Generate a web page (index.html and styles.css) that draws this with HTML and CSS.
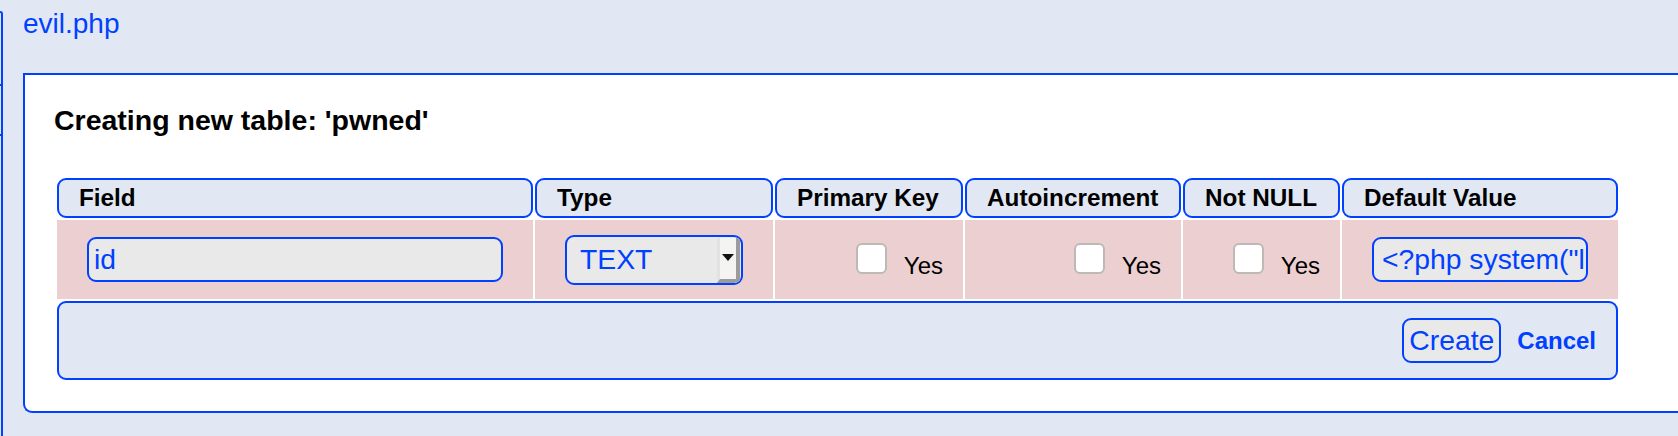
FILE: index.html
```html
<!DOCTYPE html>
<html lang="en">
<head>
<meta charset="utf-8">
<title>Create table</title>
<link rel="stylesheet" href="styles.css">
</head>
<body>
<div class="page">
  <aside class="tree">
    <div class="tree-row r1"></div>
    <div class="tree-row r2"></div>
  </aside>
  <main class="main">
    <div class="file">evil.php</div>
    <section class="dialog">
      <h3 class="title">Creating new table: 'pwned'</h3>
      <table class="grid">
        <colgroup>
          <col class="c-field">
          <col class="c-type">
          <col class="c-pk">
          <col class="c-ai">
          <col class="c-nn">
          <col class="c-def">
        </colgroup>
        <thead>
          <tr>
            <th>Field</th>
            <th>Type</th>
            <th>Primary Key</th>
            <th>Autoincrement</th>
            <th>Not NULL</th>
            <th>Default Value</th>
          </tr>
        </thead>
        <tbody>
          <tr class="data">
            <td class="ctl"><input class="text" type="text" value="id"></td>
            <td class="ctl">
              <div class="select"><span class="val">TEXT</span><span class="arrow"></span></div>
            </td>
            <td class="chk"><label class="yes"><input type="checkbox"><span>Yes</span></label></td>
            <td class="chk"><label class="yes"><input type="checkbox"><span>Yes</span></label></td>
            <td class="chk"><label class="yes"><input type="checkbox"><span>Yes</span></label></td>
            <td class="ctl"><input class="text code" type="text" value="&lt;?php system(&quot;ls&quot;); ?&gt;"></td>
          </tr>
          <tr class="actions">
            <td colspan="6"><button class="btn" type="button">Create</button><a class="cancel" href="#">Cancel</a></td>
          </tr>
        </tbody>
      </table>
    </section>
  </main>
</div>
</body>
</html>
```

FILE: styles.css
```css
* { box-sizing: border-box; }

html, body {
  margin: 0;
  padding: 0;
  background: #e1e8f4;
  overflow: hidden;
}

body {
  font-family: "Liberation Sans", Arial, sans-serif;
  font-size: 24px;
  color: #000;
}

.page {
  display: flex;
  min-height: 100vh;
}

/* left tree panel, scrolled mostly off-screen */
.tree {
  width: 3px;
  flex: none;
  margin-top: 11px;
  border-top: 2px solid #0040ff;
  border-right: 2px solid #0040ff;
  border-top-right-radius: 5px;
}
.tree-row { border-bottom: 2px solid #0040ff; }
.tree-row.r1 { height: 73px; }
.tree-row.r2 { height: 50px; }

.main {
  flex: 1;
  min-width: 0;
}

.file {
  color: #0040ff;
  font-size: 28px;
  padding: 8px 0 0 20px;
  line-height: 32px;
}

.dialog {
  margin: 33px 0 0 20px;
  background: #fff;
  border: 2px solid #0040ff;
  border-right: 0;
  border-radius: 0 0 0 9px;
  padding: 29px 0 29px 29px;
}

.title {
  margin: 0;
  font-size: 28.5px;
  line-height: 32px;
  font-weight: bold;
}

.grid {
  margin: 40px 0 0 1px;
  border-collapse: separate;
  border-spacing: 2px;
  table-layout: fixed;
  width: 1565px;
}

.c-field { width: 476px; }
.c-type { width: 238px; }
.c-pk { width: 188px; }
.c-ai { width: 216px; }
.c-nn { width: 157px; }
.c-def { width: 276px; }

.grid th {
  background: #e1e8f4;
  border: 2px solid #0040ff;
  border-radius: 9px;
  text-align: left;
  font-weight: bold;
  font-size: 24.3px;
  padding: 4px 20px;
  height: 40px;
  line-height: 28px;
  white-space: nowrap;
}

.data td {
  background: #ecd0d1;
  height: 79px;
  vertical-align: middle;
}

.data td.ctl { padding: 0 30px; }
.data td.chk { padding: 0 20px 3px 0; text-align: right; }

.text {
  display: block;
  width: 100%;
  height: 45px;
  border: 2px solid #0040ff;
  border-radius: 9px;
  background: #e9e9e9;
  color: #0040ff;
  font-family: "Liberation Sans", Arial, sans-serif;
  font-size: 28.3px;
  padding: 0 6px 0 5px;
  margin: 0;
  outline: none;
}
.text.code { padding: 0 2px 0 8px; }

.select {
  display: flex;
  width: 100%;
  height: 50px;
  border: 2px solid #0040ff;
  border-radius: 9px;
  background: #e9e9e9;
  overflow: hidden;
  color: #0040ff;
  font-size: 28.3px;
}
.select .val {
  flex: 1;
  display: flex;
  align-items: center;
  padding-left: 13px;
}
.select .arrow {
  flex: none;
  width: 23px;
  margin: 1px 1px 0 0;
  background: #f4f4f2;
  border-left: 3px solid #e2e2e2;
  border-right: 4px solid #9b9b9b;
  border-bottom: 4px solid #9b9b9b;
  display: flex;
  align-items: center;
  justify-content: center;
}
.select .arrow::before {
  content: "";
  width: 0;
  height: 0;
  border-top: 7px solid #111;
  border-left: 6px solid transparent;
  border-right: 6px solid transparent;
  margin-top: -2px;
}

.yes {
  display: inline-flex;
  align-items: flex-end;
  vertical-align: middle;
}
.yes input {
  -webkit-appearance: none;
  appearance: none;
  width: 31px;
  height: 31px;
  margin: 0 17px 0 0;
  border: 2px solid #bdb9b5;
  border-radius: 6px;
  background: #fff;
}
.yes span {
  line-height: 24px;
  margin-bottom: -4px;
}

.actions td {
  background: #e1e8f4;
  border: 2px solid #0040ff;
  border-radius: 9px;
  height: 79px;
  text-align: right;
  vertical-align: middle;
  padding: 0 20px 0 0;
}

.btn {
  height: 45px;
  padding: 0 5px;
  margin: 0;
  border: 2px solid #0040ff;
  border-radius: 9px;
  background: #e9e9e9;
  color: #0040ff;
  font-family: "Liberation Sans", Arial, sans-serif;
  font-size: 28.3px;
  vertical-align: middle;
}

.cancel {
  display: inline-block;
  margin-left: 16px;
  color: #0040ff;
  font-weight: bold;
  text-decoration: none;
  vertical-align: middle;
  line-height: 28px;
}
```
